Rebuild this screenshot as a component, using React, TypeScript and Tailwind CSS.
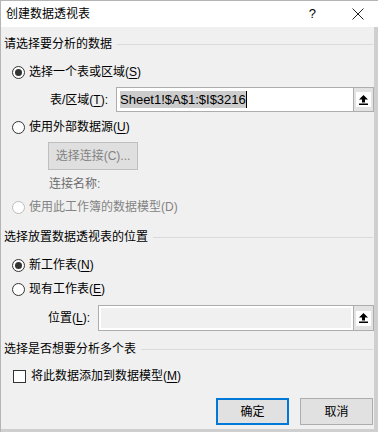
import type { ReactNode } from "react";

const FONT = "[font-family:'Liberation_Sans','Noto_Sans_CJK_SC',sans-serif]";

function Radio({ checked = false, disabled = false }: { checked?: boolean; disabled?: boolean }) {
  return (
    <span
      className={
        "flex h-[13px] w-[13px] shrink-0 items-center justify-center rounded-full border bg-white " +
        (disabled ? "border-[#bcbcbc]" : "border-[#333333]")
      }
    >
      {checked && <span className="h-[7px] w-[7px] rounded-full bg-[#333333]" />}
    </span>
  );
}

function Section({ title }: { title: string }) {
  return (
    <div className="flex h-[20px] items-center pl-[3px] pr-[1px]">
      <span className="whitespace-nowrap">{title}</span>
      <span className="ml-[5px] h-px flex-1 bg-[#dadada]" />
    </div>
  );
}

function U({ children }: { children: ReactNode }) {
  return <span className="underline underline-offset-2">{children}</span>;
}

function PickButton() {
  return (
    <div className="flex w-[20px] shrink-0 items-center justify-center border-l border-[#adadad] bg-[#e3e3e3]">
      <span className="flex h-[15px] w-[15px] items-center justify-center bg-white">
        <svg width="9" height="10" viewBox="0 0 9 10">
          <path d="M4.5 0 L9 4.5 L6 4.5 L6 7.5 L3 7.5 L3 4.5 L0 4.5 Z" fill="#000" />
          <rect x="0" y="8.5" width="9" height="1.5" fill="#000" />
        </svg>
      </span>
    </div>
  );
}

export default function App() {
  return (
    <div
      className={
        "flex h-[432px] w-[378px] flex-col overflow-hidden border-l border-t border-[#b5b5b5] text-[12px] text-black " +
        FONT
      }
    >
      {/* Title bar */}
      <div className="flex h-[26px] shrink-0 items-center bg-white pl-[5px]">
        <span>创建数据透视表</span>
        <span className="ml-auto mr-[36px] text-[13px]">?</span>
        <svg className="mr-[14px]" width="12" height="12" viewBox="0 0 12 12">
          <path d="M0.5 0.5 L11.5 11.5 M11.5 0.5 L0.5 11.5" stroke="#222" strokeWidth="1" />
        </svg>
      </div>

      <div className="flex flex-1 border-b-[3px] border-r-[4px] border-[#cfcfcf]">
        <div className="flex flex-1 flex-col bg-[#f0f0f0]">
          <div className="mt-[7px]">
            <Section title="请选择要分析的数据" />
          </div>

          <div className="mt-[8px] flex h-[20px] items-center gap-[4px] pl-[11px]">
            <Radio checked />
            <span>
              选择一个表或区域(<U>S</U>)
            </span>
          </div>

          <div className="mt-[5px] flex h-[25px] items-center">
            <span className="w-[115px] pr-[8px] text-right">
              表/区域(<U>T</U>):
            </span>
            <div className="flex h-[25px] flex-1 border border-[#adadad] bg-white">
              <div className="flex flex-1 items-center pl-[3px]">
                <span className="bg-[#cccccc] text-[13px] leading-[17px]">Sheet1!$A$1:$I$3216</span>
                <span className="h-[17px] w-px bg-black" />
              </div>
              <PickButton />
            </div>
          </div>

          <div className="mt-[5px] flex h-[20px] items-center gap-[4px] pl-[11px]">
            <Radio />
            <span>
              使用外部数据源(<U>U</U>)
            </span>
          </div>

          <div className="mt-[5px] flex pl-[47px]">
            <div className="flex h-[28px] w-[90px] items-center justify-center border border-[#bfbfbf] bg-[#dfdfdf] text-[#838383]">
              选择连接(C)...
            </div>
          </div>

          <div className="mt-[4px] flex h-[20px] items-center pl-[48px] text-[#6d6d6d]">连接名称:</div>

          <div className="mt-[3px] flex h-[20px] items-center gap-[4px] pl-[11px] text-[#838383]">
            <Radio disabled />
            <span>使用此工作簿的数据模型(D)</span>
          </div>

          <div className="mt-[10px]">
            <Section title="选择放置数据透视表的位置" />
          </div>

          <div className="mt-[8px] flex h-[20px] items-center gap-[4px] pl-[11px]">
            <Radio checked />
            <span>
              新工作表(<U>N</U>)
            </span>
          </div>

          <div className="mt-[4px] flex h-[20px] items-center gap-[4px] pl-[11px]">
            <Radio />
            <span>
              现有工作表(<U>E</U>)
            </span>
          </div>

          <div className="mt-[6px] flex h-[26px] items-center">
            <span className="w-[97px] pl-[47px]">
              位置(<U>L</U>):
            </span>
            <div className="flex h-[26px] flex-1 border border-[#adadad] bg-white">
              <div className="m-[2px] flex-1 bg-[#f0f0f0]" />
              <PickButton />
            </div>
          </div>

          <div className="mt-[8px]">
            <Section title="选择是否想要分析多个表" />
          </div>

          <div className="mt-[7px] flex h-[20px] items-center gap-[5px] pl-[12px]">
            <span className="h-[13px] w-[13px] shrink-0 border border-[#333333] bg-white" />
            <span>
              将此数据添加到数据模型(<U>M</U>)
            </span>
          </div>

          <div className="mt-[12px] flex justify-end gap-[11px] pr-[1px]">
            <div className="flex h-[27px] w-[73px] items-center justify-center border-2 border-[#0078d7] bg-[#e1e1e1]">
              确定
            </div>
            <div className="flex h-[27px] w-[73px] items-center justify-center border border-[#adadad] bg-[#e1e1e1]">
              取消
            </div>
          </div>
        </div>
      </div>
    </div>
  );
}
